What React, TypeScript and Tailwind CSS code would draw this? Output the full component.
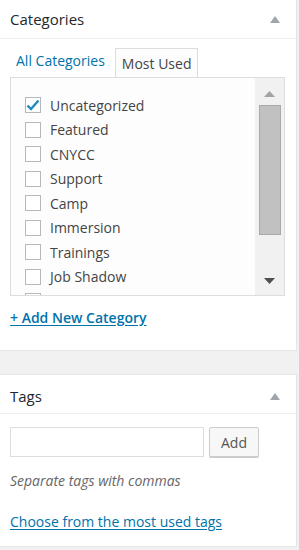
const categories = [
  'Uncategorized',
  'Featured',
  'CNYCC',
  'Support',
  'Camp',
  'Immersion',
  'Trainings',
  'Job Shadow',
  'Internship',
];

function Toggle() {
  return (
    <svg width="10" height="7" viewBox="0 0 10 7" className="fill-[#a0a5aa]">
      <path d="M5 0 L10 7 L0 7 Z" />
    </svg>
  );
}

function PanelHeader({ title }: { title: string }) {
  return (
    <div className="flex h-[39px] items-center justify-between border-b border-[#eeeeee] pl-[10px] pr-[16px]">
      <h2 className="text-[15px] text-[#23282d]">{title}</h2>
      <Toggle />
    </div>
  );
}

export default function App() {
  return (
    <div
      className="h-[550px] w-[299px] bg-[#f1f1f1] text-[14px] text-[#444]"
      style={{ fontFamily: '"Open Sans", "Noto Sans", sans-serif' }}
    >
      <div className="h-[351px] w-[297px] border-r border-b border-[#e5e5e5] bg-white">
        <PanelHeader title="Categories" />
        <div className="px-[10px]">
          <div className="mt-[9px] flex h-[29px] items-end">
            <span className="mb-[6px] ml-[6px] text-[#0073aa]">All Categories</span>
            <span className="ml-[10px] flex h-[29px] items-center border border-b-0 border-[#dddddd] bg-[#fdfdfd] px-[6px] text-[#444]">
              Most Used
            </span>
          </div>
          <div className="flex h-[219px] w-[275px] overflow-hidden border border-[#dddddd] bg-[#fdfdfd]">
            <ul className="flex-1 pt-[15px] pl-[14px]">
              {categories.map((c, i) => (
                <li key={c} className="flex h-[24.5px] items-center gap-[9px]">
                  <span className="flex h-[16px] w-[16px] shrink-0 items-center justify-center border border-[#b4b9be] bg-white">
                    {i === 0 && (
                      <svg width="14" height="12" viewBox="0 0 14 12">
                        <path d="M1.5 6.5 L5 10 L12.5 1.5" fill="none" stroke="#1e8cbe" strokeWidth="2.4" />
                      </svg>
                    )}
                  </span>
                  <span className="text-[#444]">{c}</span>
                </li>
              ))}
            </ul>
            <div className="flex w-[29px] flex-col items-center bg-[#f1f1f1]">
              <svg width="11" height="6" viewBox="0 0 11 6" className="mt-[13px] fill-[#a3a3a3]">
                <path d="M5.5 0 L11 6 L0 6 Z" />
              </svg>
              <div className="mt-[8px] h-[130px] w-[22px] border border-[#aaaaaa] bg-[#c1c1c1]" />
              <svg width="11" height="6" viewBox="0 0 11 6" className="mt-auto mb-[11px] fill-[#505050]">
                <path d="M0 0 L11 0 L5.5 6 Z" />
              </svg>
            </div>
          </div>
          <a className="mt-[11px] block w-fit font-semibold text-[#0073aa] underline underline-offset-2">
            + Add New Category
          </a>
        </div>
      </div>

      <div className="mt-[23px] h-[173px] w-[297px] border-t border-r border-b border-[#e5e5e5] bg-white">
        <div className="flex h-[39px] items-center justify-between border-b border-[#eeeeee] pl-[10px] pr-[16px] pt-[4px]">
          <h2 className="text-[15px] text-[#23282d]">Tags</h2>
          <Toggle />
        </div>
        <div className="px-[10px] pt-[13px]">
          <div className="flex items-center gap-[5px]">
            <input
              type="text"
              className="h-[30px] w-[194px] border border-[#dddddd] bg-white outline-none"
            />
            <button className="h-[30px] w-[50px] rounded-[2px] border border-[#cccccc] bg-[#f7f7f7] text-[#555] shadow-[0_1px_0_#cccccc]">
              Add
            </button>
          </div>
          <p className="mt-[13px] italic text-[#666]">Separate tags with commas</p>
          <a className="mt-[20px] block w-fit text-[#0073aa] underline underline-offset-2">
            Choose from the most used tags
          </a>
        </div>
      </div>
    </div>
  );
}
